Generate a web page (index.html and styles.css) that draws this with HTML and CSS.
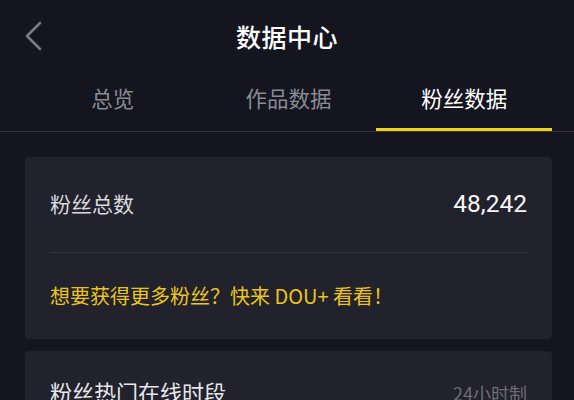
FILE: index.html
```html
<!doctype html>
<html lang="zh-CN">
<head>
    <meta charset="UTF-8">
    <title>数据中心</title>
    <link rel="stylesheet" href="styles.css">
</head>
<body>
<div class="header">
    <div class="back">
        <svg width="20" height="32" viewBox="0 0 20 32">
            <polyline points="16,3 3,16 16,29" fill="none" stroke="#7a7a82" stroke-width="2.6" stroke-linecap="round" stroke-linejoin="round"/>
        </svg>
    </div>
    <h1 class="title">数据中心</h1>
    <div></div>
</div>

<div class="tabs">
    <div class="tab-list">
        <div class="tab">总览</div>
        <div class="tab">作品数据</div>
        <div class="tab active">粉丝数据</div>
    </div>
</div>

<div class="content">
    <div class="card">
        <div class="row">
            <span class="label">粉丝总数</span>
            <span class="num">48,242</span>
        </div>
        <div class="line"></div>
        <div class="promo">想要获得更多粉丝？快来 DOU+ 看看！</div>
    </div>

    <div class="card">
        <div class="row head">
            <span class="label big">粉丝热门在线时段</span>
            <span class="hint">24小时制</span>
        </div>
    </div>
</div>
</body>
</html>
```

FILE: styles.css
```css
* {
    margin: 0;
    padding: 0;
    box-sizing: border-box;
}
body {
    background: #15151f;
    font-family: "Noto Sans CJK SC", "Noto Sans", sans-serif;
    color: #fff;
    width: 574px;
    height: 400px;
    overflow: hidden;
}
.header {
    height: 72px;
    display: grid;
    grid-template-columns: 1fr auto 1fr;
    align-items: center;
    padding: 0 24px;
}
.back {
    display: flex;
    align-items: center;
}
.title {
    font-size: 25px;
    font-weight: 500;
    line-height: 30px;
    color: #fff;
    letter-spacing: 0.5px;
}
.tabs {
    border-bottom: 1px solid #33343e;
}
.tab-list {
    display: grid;
    grid-template-columns: repeat(3, 1fr);
    margin: 0 22px 0 25px;
}
.tab {
    text-align: center;
    font-size: 21.5px;
    line-height: 30px;
    padding: 11px 0 15px;
    border-bottom: 3px solid transparent;
    color: #8a8a92;
}
.tab.active {
    color: #fff;
    border-bottom-color: #f4cf1e;
}
.content {
    margin: 25px 22px 0 25px;
    display: flex;
    flex-direction: column;
    gap: 12px;
}
.card {
    background: #21222c;
    border-radius: 4px;
}
.row {
    height: 95px;
    padding: 0 25px 3px;
    display: flex;
    justify-content: space-between;
    align-items: center;
}
.label {
    font-size: 21px;
    color: #d9d9de;
}
.num {
    font-family: Roboto, "Liberation Sans", sans-serif;
    font-size: 24.5px;
    color: #f7f7f7;
}
.line {
    height: 1px;
    margin: 0 25px;
    background: #34353f;
}
.promo {
    height: 86px;
    padding: 0 25px 2px;
    display: flex;
    align-items: center;
    font-size: 20px;
    color: #ecc51c;
}
.row.head {
    height: 80px;
    align-items: baseline;
    padding-top: 24px;
}
.label.big {
    font-size: 22px;
    color: #e6e6ea;
}
.hint {
    font-size: 18px;
    color: #6c6c74;
}
```
